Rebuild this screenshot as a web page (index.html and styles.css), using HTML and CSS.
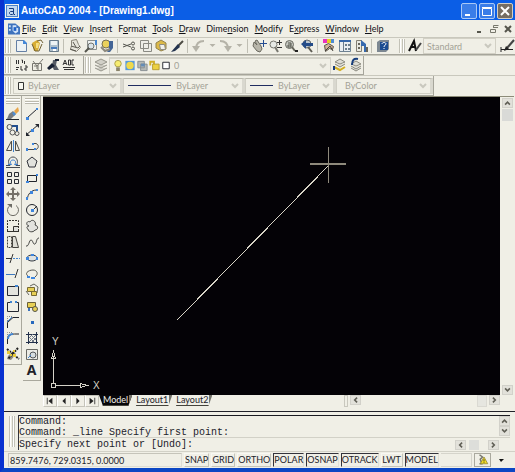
FILE: index.html
```html
<!DOCTYPE html>
<html lang="en">
<head>
<meta charset="utf-8">
<title>AutoCAD 2004 - [Drawing1.dwg]</title>
<link rel="stylesheet" href="styles.css">
</head>
<body>
<div class="window">
  <header class="titlebar">
    <svg class="app-icon" viewBox="0 0 14 14"><path fill="#f4f4ec" d="M0 0h14v14H0z"/><path fill="#4f83c8" d="M1 1h12v12H1z"/><path fill="#c3d9f1" d="M2 2h10v10H2z"/><path fill="none" stroke="#173e80" stroke-width="1" d="M4 4.500h4.500v6M9 7.500H5.500l-1 1v1l1 1h2l1-1M9 10.500h1"/></svg>
    <h1 class="title">AutoCAD 2004 - [Drawing1.dwg]</h1>
    <button class="win-btn" aria-label="Minimize"><svg viewBox="0 0 14 14"><path fill="#fff" d="M3 10h5v2H3z"/></svg></button>
    <button class="win-btn" aria-label="Restore"><svg viewBox="0 0 14 14"><path fill="none" stroke="#fff" d="M2.500 4.500h9v7h-9zM2 3.500h10"/></svg></button>
    <button class="win-btn win-close" aria-label="Close"><svg viewBox="0 0 14 14"><path stroke="#fff" stroke-width="2" d="M3 3l8 8M11 3l-8 8"/></svg></button>
  </header>

  <nav class="menubar">
    <svg class="doc-icon" viewBox="0 0 13 12"><path fill="#3d72bd" d="M0 0h8l5 4v8H0z"/><path fill="#cfe2f8" d="M1 2h2v2H1zM1 6h2v2H1zM5 2h4v3h2v4l-3 2-3-3z"/><path fill="#1e61c8" d="M6 4h3v4H6z"/></svg>
    <button><u>F</u>ile</button><button><u>E</u>dit</button><button><u>V</u>iew</button><button><u>I</u>nsert</button><button>F<u>o</u>rmat</button><button><u>T</u>ools</button><button><u>D</u>raw</button><button>Dime<u>n</u>sion</button><button><u>M</u>odify</button><button>E<u>x</u>press</button><button><u>W</u>indow</button><button><u>H</u>elp</button>
    <span class="mdi">
      <button class="mdi-btn" aria-label="Minimize drawing"><svg viewBox="0 0 10 10"><path fill="#55554c" d="M2 7h4v2H2z"/></svg></button>
      <button class="mdi-btn" aria-label="Restore drawing"><svg viewBox="0 0 10 10"><path fill="none" stroke="#77776c" d="M4.500 4V1.500h5M4 3.500h5M1.500 5.500h5v3h-5z"/></svg></button>
      <button class="mdi-btn" aria-label="Close drawing"><svg viewBox="0 0 10 10"><path stroke="#55554c" stroke-width="2" d="M2 2l6 6M8 2l-6 6"/></svg></button>
    </span>
  </nav>

  <div class="row row-standard">
    <div class="bar bar-main">
      <i class="grip"></i>
      <button class="tool" aria-label="New"><svg viewBox="0 0 16 16"><path fill="#edf2f4" stroke="#6580a5" d="M3.500 2.500h7l3 3v8h-10z"/><path fill="#4387d8" d="M10 2h1l3 3v1h-4z"/></svg></button>
      <button class="tool" aria-label="Open"><svg viewBox="0 0 16 16"><path fill="#d8ad35" d="M3 5l5-3 3 3-2 8H5z"/><path fill="none" stroke="#706135" d="M3 6l3 7h4l3-7M8 3l4-1 2 3"/><path fill="#f5df83" d="M7 5h3l-1 5H7z"/></svg></button>
      <button class="tool" aria-label="Save"><svg viewBox="0 0 16 16"><path fill="#aebfcb" stroke="#667989" d="M4.500 2.500h9v11h-9z"/><path fill="#eef3f4" d="M6 3h6v4H6z"/><path fill="#477bbd" d="M6 9h6v2H6z"/><path fill="#fff" d="M8 11h3v2H8z"/></svg></button>
      <i class="sep"></i>
      <button class="tool" aria-label="Plot"><svg viewBox="0 0 16 16"><path fill="#e5e4db" stroke="#888579" d="M4.500 2.500l5-1 2 5 2 3-4 4-6-2 1-4z"/><path fill="none" stroke="#5c5a52" d="M4 8l7 2 2-2M6 4l3 5M3 11l6 2"/></svg></button>
      <button class="tool" aria-label="Plot preview"><svg viewBox="0 0 16 16"><path fill="#edf0ef" stroke="#8b8f8d" d="M4.500 2.500h9v9h-9z"/><path fill="#4888cf" d="M12 2h2v5h-2z"/><circle cx="8" cy="8" r="3" fill="#dbe4e8" stroke="#6f726d"/><path stroke="#55564e" stroke-width="2" d="M6 10l-4 4"/></svg></button>
      <button class="tool" aria-label="Publish"><svg viewBox="0 0 16 16"><circle cx="7" cy="6" r="4" fill="#ead15b" stroke="#777052"/><path fill="#436596" d="M10 3h4v7l-3 4H8l2-3z"/><path fill="none" stroke="#8c897e" stroke-width="2" d="M2 9l4 4 5-2"/></svg></button>
      <i class="sep"></i>
      <button class="tool" aria-label="Cut"><svg viewBox="0 0 16 16"><path fill="none" stroke="#55564f" stroke-width="1" d="M2 6l8 3M2 9l8-3"/><circle cx="12" cy="5.500" r="1.500" fill="none" stroke="#55564f"/><circle cx="12" cy="10.500" r="1.500" fill="none" stroke="#55564f"/></svg></button>
      <button class="tool" aria-label="Copy"><svg viewBox="0 0 16 16"><path fill="#eeeee8" stroke="#8a8a83" d="M3.500 2.500h8v8h-8zM6.500 5.500h8v8h-8z"/></svg></button>
      <button class="tool" aria-label="Paste"><svg viewBox="0 0 16 16"><path fill="#dcb948" stroke="#93834d" d="M8 2l5 3v6l-5 2-5-3V5z"/><path fill="#f0f0ec" stroke="#8e8c81" d="M6.500 6.500h5l1 5h-5z"/></svg></button>
      <button class="tool" aria-label="Match properties"><svg viewBox="0 0 16 16"><path stroke="#4c4b44" stroke-width="2" d="M14 3L8 9"/><path fill="#24344f" d="M9 6l2 3-5 4-4 1z"/></svg></button>
      <i class="sep"></i>
      <button class="tool" aria-label="Undo"><svg viewBox="0 0 16 16"><path fill="none" stroke="#b5b3a8" stroke-width="2" d="M13 3c-6 0-8 3-8 8"/><path fill="#b5b3a8" d="M1 8h8l-4 6z"/></svg></button>
      <button class="drop" aria-label="Undo list"><svg viewBox="0 0 8 8"><path fill="#b5b3a8" d="M1 2h6L4 5z"/></svg></button>
      <button class="tool" aria-label="Redo"><svg viewBox="0 0 16 16"><path fill="none" stroke="#b5b3a8" stroke-width="2" d="M2 3c6 0 8 3 8 8"/><path fill="#b5b3a8" d="M6 8h8l-4 6z"/></svg></button>
      <button class="drop" aria-label="Redo list"><svg viewBox="0 0 8 8"><path fill="#b5b3a8" d="M1 2h6L4 5z"/></svg></button>
      <i class="sep"></i>
      <button class="tool" aria-label="Pan"><svg viewBox="0 0 16 16"><path fill="#b8b6aa" stroke="#6b6a60" d="M3 4l3 3-2-4 2-1 4 6 1 3-2 3-3-1-4-5z"/><path stroke="#244c91" d="M12.500 2v7M9 5.500h7"/></svg></button>
      <button class="tool" aria-label="Zoom realtime"><svg viewBox="0 0 16 16"><circle cx="6.500" cy="6.500" r="3.500" fill="#e6e9e5" stroke="#77776f"/><path stroke="#77776f" stroke-width="2" d="M8 9l3 5"/><path stroke="#333" d="M12.500 2v5M10 4.500h5M10 9.500h5"/></svg></button>
      <button class="tool" aria-label="Zoom window"><svg viewBox="0 0 16 16"><circle cx="6.500" cy="6.500" r="4" fill="#c6c8c1" stroke="#696a61"/><path fill="none" stroke="#55564d" d="M5 5h3v4H5V7h3"/><path stroke="#66665b" stroke-width="2" d="M9 9l3 4"/><path fill="#222" d="M12 12h3v2h-3z"/></svg></button>
      <button class="tool" aria-label="Zoom previous"><svg viewBox="0 0 16 16"><circle cx="8" cy="6" r="4" fill="#b9c5ce" stroke="#67696a"/><path fill="#244c88" d="M2 6l5-4v3h7v3H7v3z"/><path stroke="#5d5c53" stroke-width="2" d="M9 9l4 5"/></svg></button>
      <i class="sep"></i>
      <button class="tool" aria-label="Properties"><svg viewBox="0 0 16 16"><path fill="#e934be" d="M2 1h4v4H2z"/><path fill="#e8cd21" d="M6 1h4v4H6z"/><path fill="#4c8bd5" d="M10 1h3v4h-3z"/><path fill="#d1b49a" stroke="#57534a" d="M3.500 7.500l4-2 5 3-1 3-3-1-4 3z"/><path stroke="#46433c" fill="none" stroke-width="1" d="M4 13l5-5 3 5"/></svg></button>
      <button class="tool" aria-label="DesignCenter"><svg viewBox="0 0 16 16"><path fill="#e9eef1" stroke="#6f8293" d="M2.500 2.500h11v11h-11z"/><path fill="#3566a9" d="M2 2h12v2H2z"/><path fill="#6b7d8c" d="M6 4h1v9H6zM8 6h2v2H8zM11 6h2v2h-2zM8 10h2v2H8zM11 10h2v2h-2z"/></svg></button>
      <button class="tool" aria-label="Tool palettes"><svg viewBox="0 0 16 16"><path fill="#e9e9e2" stroke="#837f73" d="M3.500 2.500h5v11h-5z"/><path fill="#3669ae" d="M8 2l5 4v8h-2V8H8z"/><path fill="#67645a" d="M5 5h2v2H5zM5 9h2v2H5zM13 9h2v5h-2z"/></svg></button>
      <i class="sep"></i>
      <button class="tool" aria-label="Help"><svg viewBox="0 0 16 16"><path fill="#7c8791" d="M2 4l3-2h9v9l-3 3H2z"/><path fill="#1b4c91" d="M5 4h8v8H5z"/><path fill="none" stroke="#fff" stroke-width="1" d="M7 6c0-2 4-2 4 0 0 1-2 1-2 3M9 10v1"/></svg></button>
    </div>
    <div class="bar bar-styles">
      <i class="grip"></i>
      <button class="tool" aria-label="Text style"><svg viewBox="0 0 16 16"><path fill="none" stroke="#111" stroke-width="2" d="M2 13L7 3l2 10M4 9h5"/><path stroke="#444" stroke-width="2" d="M14 5l-5 7"/></svg></button>
      <select class="combo" aria-label="Text style name" disabled><option>Standard</option></select>
      <button class="tool tool-end" aria-label="Dimension style"><svg viewBox="0 0 16 16"><path stroke="#222" d="M2 9v5M2 11.500h12"/><path stroke="#444" stroke-width="2" d="M15 2l-7 8"/><path fill="#222" d="M7 8l3 3-5 2z"/></svg></button>
    </div>
  </div>

  <div class="row row-layers">
    <div class="bar bar-text">
      <i class="grip"></i>
      <button class="tool" aria-label="Arc text"><svg viewBox="0 0 16 16"><path fill="none" stroke="#333" stroke-width="1" d="M3.500 3v4M5.500 3v4M8.500 3h1v3M11.500 4v3M3 10.500h3M3 12.500h2M8 9v4h2M12 9h2v2h-2v2h2"/></svg></button>
      <button class="tool" aria-label="Edit block"><svg viewBox="0 0 16 16"><path fill="none" stroke="#77766f" d="M3.500 6.500h9v7h-9zM4 4l4 5 6-7M5 9h3v3M9 8v5"/></svg></button>
      <button class="tool" aria-label="Find text"><svg viewBox="0 0 16 16"><path fill="#555b64" d="M8 3h4l-1 5 3 5H9L7 9z"/><path fill="#172033" d="M2 11l5-5 3 3-6 4zM10 2h4v2h-4z"/></svg></button>
      <button class="tool" aria-label="Spelling"><svg viewBox="0 0 16 16"><path fill="none" stroke="#333" d="M2 8l2-5 2 5M3 6.500h2M7.500 3v5h2V3zM13 3h-2v5h2M2 10.500h12M3 12.500h10"/></svg></button>
    </div>
    <div class="bar bar-layer">
      <i class="grip"></i>
      <button class="tool" aria-label="Layer manager"><svg viewBox="0 0 16 16"><path fill="#d1d0c8" stroke="#96958b" d="M8 2l6 3-6 3-6-3zM2 8l6 3 6-3M2 11l6 3 6-3"/></svg></button>
      <div class="layer-box">
        <svg class="state" viewBox="0 0 12 14"><circle cx="6" cy="5" r="3.500" fill="#f7ed70" stroke="#a99d48"/><path fill="#8b846a" d="M4 9h4v4H4z"/></svg>
        <svg class="state" viewBox="0 0 12 14"><path fill="#589bdb" d="M1 2h10v10H1z"/><circle cx="6" cy="7" r="4" fill="#efd94b"/></svg>
        <svg class="state" viewBox="0 0 12 14"><path fill="#b6b9b6" stroke="#858d91" d="M1.500 2.500h7v7h-7zM4.500 5.500h7v7h-7z"/><path fill="#638cb7" d="M5 5h4v3H5z"/></svg>
        <svg class="state" viewBox="0 0 12 14"><path fill="none" stroke="#cfae28" stroke-width="2" d="M2 7V3h4v4"/><path fill="#ecd141" stroke="#b59b2f" d="M4.500 5.500h7v6h-7z"/></svg>
        <svg class="state swatch" viewBox="0 0 12 14"><path fill="#fff" stroke="#22232c" stroke-width="1" d="M2.500 3.500h7v7h-7z"/></svg>
        <select class="layer-select" aria-label="Layer" disabled><option>0</option></select>
      </div>
      <button class="tool" aria-label="Make object layer current"><svg viewBox="0 0 16 16"><path fill="#deddd5" stroke="#8b8a80" d="M9 2l5 3-5 2-5-2zM4 7l5 3 5-3"/><path fill="none" stroke="#d2af24" stroke-width="2" d="M3 10l6 3 5-3"/><path fill="#183c7b" d="M2 9h2v4H2z"/></svg></button>
      <button class="tool" aria-label="Layer previous"><svg viewBox="0 0 16 16"><path fill="#deddd5" stroke="#8b8a80" d="M9 4l5 3-5 2-5-2zM4 9l5 3 5-3M4 11l5 3 5-3"/><path fill="none" stroke="#173d7c" stroke-width="2" d="M11 2C7 1 5 3 5 8"/></svg></button>
    </div>
  </div>

  <div class="row row-props">
    <div class="bar bar-props">
      <i class="grip"></i>
      <div class="prop prop-color"><svg class="chip" viewBox="0 0 10 10"><path fill="#f7f7f0" stroke="#333" d="M2.500 1.500h5v7h-5z"/></svg><select aria-label="Color" disabled><option>ByLayer</option></select></div>
      <div class="prop prop-line"><i class="stroke"></i><select aria-label="Linetype" disabled><option>ByLayer</option></select></div>
      <div class="prop prop-weight"><i class="stroke stroke-short"></i><select aria-label="Lineweight" disabled><option>ByLayer</option></select></div>
      <div class="prop prop-plot"><select aria-label="Plot style" disabled><option>ByColor</option></select></div>
    </div>
  </div>

  <main class="workspace">
    <div class="palette palette-modify">
      <i class="grip-h"></i>
      <button class="side" aria-label="Erase"><svg viewBox="0 0 16 16"><path stroke="#22262e" d="M1 13.500h13"/><path fill="#777b7f" d="M4 8l4-3 3 3-5 5H2z"/><path fill="#e7a64b" d="M9 5l4-4 1 4-3 3z"/><path fill="#4e8dd3" d="M7 7l2-1 2 2-2 2z"/></svg></button>
      <button class="side" aria-label="Copy object"><svg viewBox="0 0 16 16"><circle cx="4.500" cy="5" r="2.500" fill="none" stroke="#555"/><circle cx="7.500" cy="10.500" r="2.500" fill="none" stroke="#555"/><circle cx="12" cy="11.500" r="2" fill="none" stroke="#555"/><path fill="none" stroke="#234f8d" stroke-width="2" d="M7 4h5v5"/></svg></button>
      <button class="side" aria-label="Mirror"><svg viewBox="0 0 16 16"><path fill="none" stroke="#4e4d48" d="M6.500 3v9.500h-5zM10.500 3v9.500h4z"/><path stroke="#4284cf" d="M8.500 2v12"/></svg></button>
      <button class="side" aria-label="Offset"><svg viewBox="0 0 16 16"><path fill="none" stroke="#454b53" d="M1 13.500h14M1 11.500h4C2 8 4 3 8 3s6 5 3 8.500h4"/><path fill="none" stroke="#3d7fcd" d="M3 10.500h3.500c-2-2-1-4.500 1.500-4.500s3.500 2.500 1.500 4.500H13"/></svg></button>
      <button class="side" aria-label="Array"><svg viewBox="0 0 16 16"><path fill="none" stroke="#292d33" stroke-width="1" d="M2.500 2.500h4v4h-4zM9.500 2.500h4v4h-4zM2.500 9.500h4v4h-4zM9.500 9.500h4v4h-4z"/></svg></button>
      <button class="side" aria-label="Move"><svg viewBox="0 0 16 16"><path fill="#757168" d="M8 1l3 3H9v3h3V5l3 3-3 3V9H9v3h2l-3 3-3-3h2V9H4v2L1 8l3-3v2h3V4H5z"/></svg></button>
      <button class="side" aria-label="Rotate"><svg viewBox="0 0 16 16"><path fill="none" stroke="#6d6c65" stroke-width="1" d="M5 3.500a5.500 5.500 0 1 0 6 0"/><path fill="#6d6c65" d="M2 2h5v4z"/></svg></button>
      <button class="side" aria-label="Scale"><svg viewBox="0 0 16 16"><path fill="none" stroke="#34332f" stroke-dasharray="2 1" d="M2.500 13V2.500h11V13"/><path fill="none" stroke="#34332f" d="M2 13.500h12M8.500 13V8.500h5"/><path fill="#dedfdb" d="M9 9h4v4H9z"/></svg></button>
      <button class="side" aria-label="Stretch"><svg viewBox="0 0 16 16"><path fill="#ddddd5" stroke="#44433e" d="M7.500 2.500h3l3 11h-6z"/><path fill="none" stroke="#44433e" stroke-dasharray="2 1" d="M2.500 13.500V2.500h4v11z"/></svg></button>
      <button class="side" aria-label="Trim"><svg viewBox="0 0 16 16"><path stroke="#333" d="M1 8.500h5M8 4l-3 9"/><path stroke="#4284cf" stroke-dasharray="2 1" d="M8 8.500h7"/></svg></button>
      <button class="side" aria-label="Extend"><svg viewBox="0 0 16 16"><path stroke="#3e79be" stroke-width="1" d="M1 8.500h9"/><path stroke="#333" d="M13 3l-3 9"/></svg></button>
      <button class="side" aria-label="Break at point"><svg viewBox="0 0 16 16"><path fill="#e4e4de" stroke="#252831" d="M2.500 4.500h11v9h-11z"/><path fill="#4284cf" d="M10 3h3v2h-3z"/></svg></button>
      <button class="side" aria-label="Break"><svg viewBox="0 0 16 16"><path fill="none" stroke="#252831" d="M5 4.500H2.500v9h11v-9H11"/><path fill="#4284cf" d="M5 3h2v2H5zM10 3h2v2h-2z"/></svg></button>
      <button class="side" aria-label="Chamfer"><svg viewBox="0 0 16 16"><path fill="none" stroke="#22252c" d="M2.500 14V8.500L8 3.500h6"/><path stroke="#4284cf" d="M2 8l5-5"/><path fill="none" stroke="#888" stroke-dasharray="1 1" d="M2.500 7V2.500H7"/></svg></button>
      <button class="side" aria-label="Fillet"><svg viewBox="0 0 16 16"><path fill="none" stroke="#22252c" d="M2.500 14v-4c0-4 3-6 7-6H14"/><path fill="none" stroke="#4284cf" stroke-width="2" d="M3 9c0-3 2-5 5-5"/><path fill="none" stroke="#888" stroke-dasharray="1 1" d="M2.500 7V2.500H7"/></svg></button>
      <button class="side" aria-label="Explode"><svg viewBox="0 0 16 16"><path fill="#8d8a7c" d="M3 10l5-5 3 3-5 6-4-1z"/><path stroke="#222" stroke-width="2" stroke-dasharray="2 1" d="M2 3l12 10M13 2L3 13"/><path fill="#e7ca3a" d="M2 5h3v3H2zM8 8h3v3H8zM5 8h2v2H5zM8 4h2v2H8z"/></svg></button>
    </div>
    <div class="palette palette-draw">
      <i class="grip-h"></i>
      <button class="side" aria-label="Line"><svg viewBox="0 0 16 16"><path stroke="#22262e" d="M3 12L13 3"/><path fill="#3d85dd" d="M2 11h3v3H2zM12 2h2v2h-2z"/></svg></button>
      <button class="side" aria-label="Construction line"><svg viewBox="0 0 16 16"><path stroke="#22262e" stroke-width="1" d="M2 13L14 3"/><path fill="#22262e" d="M2 10v4h4zM11 2h4v4z"/><path fill="#3d85dd" d="M7 7h3v3H7z"/></svg></button>
      <button class="side" aria-label="Polyline"><svg viewBox="0 0 16 16"><path fill="none" stroke="#494947" stroke-width="1" d="M2 11.500h10c3-1 3-5 0-6H9"/><path fill="#3d85dd" d="M2 10h2v3H2zM10 10h2v2h-2zM8 5h2v2H8z"/></svg></button>
      <button class="side" aria-label="Polygon"><svg viewBox="0 0 16 16"><path fill="#e1e2dd" stroke="#30333a" d="M8 3l5 4-2 6H5L3 7z"/></svg></button>
      <button class="side" aria-label="Rectangle"><svg viewBox="0 0 16 16"><path fill="none" stroke="#22262e" d="M3.500 5.500h9v6h-9z"/><path fill="#3d85dd" d="M12 4h2v2h-2zM2 11h3v2H2z"/></svg></button>
      <button class="side" aria-label="Arc"><svg viewBox="0 0 16 16"><path fill="none" stroke="#33363b" d="M3.500 13c0-5 4-9 9-9"/><path fill="#3d85dd" d="M2 11h2v3H2zM6 5h3v3H6zM12 3h2v2h-2z"/></svg></button>
      <button class="side" aria-label="Circle"><svg viewBox="0 0 16 16"><circle cx="8" cy="8" r="5.500" fill="none" stroke="#22262e"/><path stroke="#22262e" d="M9 8l4-4"/><path fill="#3d85dd" d="M7 7h3v3H7z"/></svg></button>
      <button class="side" aria-label="Revision cloud"><svg viewBox="0 0 16 16"><path fill="#e3e3de" stroke="#464744" d="M5 8C1 7 3 2 6 4c2-4 7 0 5 3 4 1 3 5 0 5-2 3-7 2-7-1-2-1-1-3 1-3z"/></svg></button>
      <button class="side" aria-label="Spline"><svg viewBox="0 0 16 16"><path fill="none" stroke="#3c3d3b" d="M2 12c3 1 3-6 5-6s2 5 4 4 1-6 4-6"/></svg></button>
      <button class="side" aria-label="Ellipse"><svg viewBox="0 0 16 16"><ellipse cx="8" cy="8" rx="5" ry="3" fill="#dfe2e1" stroke="#353a42"/><path fill="#3d85dd" d="M2 7h3v3H2zM7 4h3v2H7zM12 7h2v3h-2z"/></svg></button>
      <button class="side" aria-label="Ellipse arc"><svg viewBox="0 0 16 16"><path fill="none" stroke="#555650" stroke-width="1" d="M4 10C0 7 5 4 9 4s6 4 2 7"/><path fill="#3d85dd" d="M3 10h3v2H3zM7 11h4v2H7z"/></svg></button>
      <button class="side" aria-label="Insert block"><svg viewBox="0 0 16 16"><path fill="none" stroke="#65665e" d="M6 4l4-2 4 3-1 6M2 9l3 4"/><path fill="#e7d055" stroke="#776a32" d="M3.500 5.500h7v4h-7zM7.500 9.500h5v4h-5z"/></svg></button>
      <button class="side" aria-label="Make block"><svg viewBox="0 0 16 16"><path fill="#e7d055" stroke="#6a6039" d="M3.500 4.500h8v5h-8z"/><circle cx="11" cy="11" r="2.500" fill="#e7d055" stroke="#55564a"/><path fill="#3d73bb" d="M4 10h2v3H4z"/></svg></button>
      <button class="side" aria-label="Point"><svg viewBox="0 0 16 16"><path fill="#2769bd" d="M7 7h3v3H7z"/></svg></button>
      <button class="side" aria-label="Hatch"><svg viewBox="0 0 16 16"><path fill="none" stroke="#23314b" d="M2 4.500h12M2 12.500h12M4.500 2v12M12.500 2v12"/><path stroke="#6f7887" d="M5 8l4-4M5 12l7-7M8 12l4-4M7 5l5 5M5 7l5 5"/></svg></button>
      <button class="side" aria-label="Region"><svg viewBox="0 0 16 16"><path fill="#ecece6" stroke="#696a64" d="M2.500 3.500h11v10h-11z"/><circle cx="9" cy="9" r="3" fill="#d6dddf" stroke="#55585a"/><path stroke="#4284cf" d="M4 12l3-3"/></svg></button>
      <button class="side side-text" aria-label="Multiline text">A</button>
    </div>

    <section class="drawing">
      <svg class="canvas" viewBox="0 0 456 297" preserveAspectRatio="xMinYMax meet" shape-rendering="crispEdges" role="img" aria-label="Model space">
        <path class="entity" d="M134 222L284 69"/>
        <path class="cross" stroke-width="2" d="M266 67h36"/>
        <path class="cross" d="M284.500 50v35"/>
        <g class="ucs"><path d="M8.500 285.500h4v4h-4zM10.500 285v-27M13 287.500h24M8.500 260.500l2-7 2 7zM37 285.500l7 2-7 2z"/></g>
        <text class="ucs-label" x="9" y="247">Y</text>
        <text class="ucs-label" x="50" y="291">X</text>
      </svg>
      <div class="vscroll">
        <button class="sb" aria-label="Scroll up"><svg viewBox="0 0 10 10"><path d="M2 7l3-3 3 3"/></svg></button>
        <span class="thumb-v"></span>
        <button class="sb sb-last" aria-label="Scroll down"><svg viewBox="0 0 10 10"><path d="M2 3l3 3 3-3"/></svg></button>
      </div>
      <div class="tabs">
        <button class="nav" aria-label="First tab"><svg viewBox="0 0 10 10"><path d="M1 1h1v8H1zM8 1v8L3 5z"/></svg></button>
        <button class="nav" aria-label="Previous tab"><svg viewBox="0 0 10 10"><path d="M7 1v8L3 5z"/></svg></button>
        <button class="nav" aria-label="Next tab"><svg viewBox="0 0 10 10"><path d="M3 1v8l4-4z"/></svg></button>
        <button class="nav" aria-label="Last tab"><svg viewBox="0 0 10 10"><path d="M2 1v8l5-4zM8 1h1v8H8z"/></svg></button>
        <button class="tab tab-on">Model</button><button class="tab">Layout1</button><button class="tab">Layout2</button>
        <div class="hscroll">
          <span class="split"></span>
          <button class="sb" aria-label="Scroll left"><svg viewBox="0 0 10 10"><path d="M7 2L4 5l3 3"/></svg></button>
          <span class="thumb-h"></span>
          <button class="sb" aria-label="Scroll right"><svg viewBox="0 0 10 10"><path d="M3 2l3 3-3 3"/></svg></button>
        </div>
      </div>
    </section>
  </main>

  <section class="command">
    <i class="grip grip-tall"></i>
    <div class="console">
      <div class="history">
        <div class="lines"><p>Command:</p><p>Command: _line Specify first point:</p></div>
        <div class="hist-scroll">
          <button class="sb" aria-label="Scroll history up"><svg viewBox="0 0 10 10"><path d="M2 7l3-3 3 3"/></svg></button>
          <button class="sb" aria-label="Scroll history down"><svg viewBox="0 0 10 10"><path d="M2 3l3 3 3-3"/></svg></button>
        </div>
      </div>
      <div class="prompt">
        <label for="cmd">Specify next point or [Undo]:</label>
        <input id="cmd" type="text">
        <button class="sb" aria-label="Scroll prompt left"><svg viewBox="0 0 10 10"><path d="M7 2L4 5l3 3"/></svg></button>
        <span class="thumb-p"></span>
        <button class="sb" aria-label="Scroll prompt right"><svg viewBox="0 0 10 10"><path d="M3 2l3 3-3 3"/></svg></button>
      </div>
    </div>
  </section>

  <footer class="status">
    <output class="coords">859.7476, 729.0315, 0.0000</output>
    <button class="mode">SNAP</button><button class="mode">GRID</button><button class="mode mode-wide">ORTHO</button><button class="mode mode-wide on">POLAR</button><button class="mode mode-wide on">OSNAP</button><button class="mode mode-wider on">OTRACK</button><button class="mode mode-narrow">LWT</button><button class="mode mode-wide on">MODEL</button>
    <span class="filler"></span>
    <button class="tray" aria-label="Communication center"><svg viewBox="0 0 16 16"><path fill="none" stroke="#77766b" stroke-width="2" d="M4 1l4 3-3 3 2 6H4"/><path fill="#f2dc23" stroke="#8e8230" d="M10 4l5 9H5z"/><path stroke="#222" stroke-width="1" d="M10 7v3M10 11v1"/></svg></button>
    <button class="tray-menu" aria-label="Tray settings"><svg viewBox="0 0 8 8"><path fill="#111" d="M1 3h5L3 6z"/></svg></button>
  </footer>
</div>
</body>
</html>
```
FILE: styles.css
```css
* { box-sizing: border-box; }

body {
  margin: 0;
  background: #f0efe6;
  color: #22222a;
  font-family: Lato, "Liberation Sans", sans-serif;
  font-size: 9px;
}

button, select, input { margin: 0; padding: 0; border: 0; background: none; color: inherit; font: inherit; }
button svg { display: block; width: 100%; height: 100%; }
p { margin: 0; }
i { flex: none; }

.window {
  display: flex;
  flex-direction: column;
  min-height: 100vh;
  border-left: 4px solid #0831d0;
  border-bottom: 4px solid #0b46c4;
  background: #f0efe6;
}

/* Title and menu */
.titlebar { display: flex; align-items: center; gap: 2px; height: 20px; padding: 2px 2px 0 1px; background: #0b5ee6; }
.app-icon { width: 14px; height: 14px; flex: none; }
.title { flex: 1; margin: 0; color: #fff; font: bold 10px/16px "Liberation Sans", sans-serif; white-space: nowrap; }
.win-btn { width: 16px; height: 16px; border: 1px solid #a9c8f6; border-radius: 2px; background: #3a7de8; }
.win-close { background: #756d63; border-color: #d3cec4; }

.menubar { display: flex; align-items: center; height: 17px; padding-left: 4px; gap: 6px; color: #111116; white-space: nowrap; }
.doc-icon { width: 12px; height: 12px; flex: none; margin-right: -4px; }
.mdi { display: flex; gap: 4px; margin-left: auto; padding-right: 2px; }
.mdi-btn { width: 10px; height: 10px; }

/* Toolbars */
.row { display: flex; border-top: 1px solid #c9c8bd; }
.row-standard { height: 18px; }
.row-layers { height: 20px; }
.row-props { height: 21px; }
.bar { display: flex; align-items: center; flex: none; border-right: 1px solid #a6a59b; border-bottom: 1px solid #a6a59b; }
.row-standard .bar { border-right: 0; }
.grip { align-self: stretch; width: 6px; margin: 1px 2px 1px 1px; border: solid #c3c2b7; border-width: 0 1px; background: linear-gradient(90deg, #fff 1px, transparent 1px 2px, #c3c2b7 2px 3px, #fff 3px); }
.sep { width: 1px; height: 14px; margin: 0 3px 0 2px; background: #c0bfb4; }
.tool { flex: none; width: 16px; height: 16px; }
.drop { flex: none; width: 11px; height: 8px; }
.bar-main { flex: 0 0 394px; }
.bar-styles { flex: 1 0 0; min-width: 0; overflow: hidden; }
.bar-text { width: 80px; }
.bar-layer { width: 280px; }

select { appearance: none; opacity: 1; color: #a3a296; }
.combo, .layer-select, .prop select {
  background: url("data:image/svg+xml,%3Csvg xmlns='http://www.w3.org/2000/svg' viewBox='0 0 8 8'%3E%3Cpath d='M1 2l3 3 3-3' fill='none' stroke='%23c9c8be' stroke-width='2'/%3E%3C/svg%3E") no-repeat right 3px center / 8px 8px;
}
.combo { flex: 1; height: 16px; padding-left: 3px; border: 1px solid #d2d0c5; }
.tool-end { margin-left: 3px; }

.layer-box { display: flex; align-items: center; flex: 1; height: 17px; padding-left: 2px; border: 1px solid #d2d1c8; border-top: 2px solid #d5d4ca; }
.state { width: 12px; height: 13px; flex: none; }
.swatch { margin-right: 2px; }
.layer-select { flex: 1; align-self: stretch; }

.bar-props { width: 430px; }
.prop { display: flex; align-items: center; height: 16px; border: 1px solid #d0cfc5; border-top-color: #b9b8ad; border-right: 3px solid #d9d8cf; }
.prop select { flex: 1; min-width: 0; align-self: stretch; }
.prop-color { flex: 113; padding-left: 2px; }
.prop-line { flex: 123; padding-left: 4px; }
.prop-weight { flex: 90; padding-left: 4px; }
.prop-plot { flex: 92; padding-left: 8px; }
.chip { width: 10px; height: 10px; margin-right: 2px; }
.stroke { width: 43px; height: 1px; margin-right: 5px; background: #202d60; }
.stroke-short { width: 23px; }

/* Workspace */
.workspace { display: flex; flex: 1; padding-right: 1px; }
.palette { display: flex; flex-direction: column; align-items: center; align-self: flex-start; flex: none; width: 18px; padding: 2px 0; border: 1px solid #a9a89d; border-width: 0 1px 1px 0; }
.palette-draw { margin: 0 2px 0 1px; }
.grip-h { width: 14px; height: 6px; margin-bottom: 2px; border: solid #bbb9ad; border-width: 1px 0; background: linear-gradient(#fff 1px, transparent 1px 2px, #bbb9ad 2px 3px, #fff 3px); }
.side { width: 16px; height: 16px; flex: none; }
.side-text { font: bold 14px/16px "Open Sans", sans-serif; text-align: center; }

.drawing { display: grid; flex: 1; grid-template: minmax(0, 1fr) 12px / minmax(0, 1fr) 14px; margin-bottom: 4px; border-top: 1px solid #8c8b78; }
.canvas { width: 100%; height: 100%; background: #040206; }
.entity { stroke: #d8d4c6; }
.cross { stroke: #8f8a7c; }
.ucs { fill: none; stroke: #d5d2c8; }
.ucs-label { fill: #d5d2c8; font: 10px "Liberation Sans", sans-serif; }

.vscroll { display: flex; flex-direction: column; align-items: center; gap: 1px; padding-top: 1px; }
.sb { flex: none; width: 11px; height: 10px; border: 1px solid #d2d1ca; background: #e2e1da; }
.sb path { fill: none; stroke: #605f56; stroke-width: 2; }
.sb-last { margin-top: auto; }
.thumb-v { width: 11px; height: 12px; background: #d9dad7; }

.tabs { display: flex; grid-column: 1 / 2; min-width: 0; }
.nav { flex: none; width: 14px; height: 12px; padding: 1px; border: 1px solid #c5c4ba; border-left-color: #fff; }
.nav path { fill: #222; }
.tab { flex: none; height: 11px; padding: 0 4px; background: #f0efe6; border-bottom: 1px solid #44433c; clip-path: polygon(0 0, 100% 0, calc(100% - 4px) 100%, 4px 100%); box-shadow: inset -3px 0 #77766d; line-height: 10px; }
.tab-on { background: #08070a; color: #f0efe6; }
.hscroll { display: flex; flex: 0 1 156px; margin-left: auto; gap: 2px; }
.split { width: 4px; border: 1px solid #c9c8be; }
.thumb-h { width: 10px; margin-left: auto; border: 1px solid #dad9d2; background: #e6e6e0; }

/* Command window */
.command { display: flex; height: 40px; padding: 3px 5px 1px 4px; border-top: 1px solid #22222a; }
.grip-tall { margin: 1px 3px 3px 1px; }
.console { flex: 1; min-width: 0; border-left: 1px solid #33333b; font: 10px/11px "Liberation Mono", monospace; }
.history { display: flex; justify-content: space-between; height: 23px; border-top: 1px solid #1a1a20; border-bottom: 1px solid #d2d1c7; white-space: pre; overflow: hidden; }
.hist-scroll { display: flex; flex-direction: column; }
.prompt { display: flex; align-items: center; gap: 3px; height: 13px; padding-right: 11px; }
.prompt input { flex: 1; min-width: 0; outline: 0; }
.thumb-p { width: 10px; height: 10px; margin-right: 6px; background: #dddeda; }

/* Status bar */
.status { display: flex; align-items: stretch; gap: 2px; height: 17px; padding: 1px 4px; border-top: 1px solid #d2d1c7; white-space: nowrap; }
.coords { flex: 0 0 174px; padding-left: 1px; border: 1px solid #c5c4ba; border-color: #c5c4ba #dddcd4 #dddcd4 #c5c4ba; line-height: 13px; }
.mode { flex: 0 0 24px; border: 1px solid #c5c4ba; border-top-color: #f8f8f2; border-left-color: #f8f8f2; line-height: 12px; }
.mode-narrow { flex-basis: 22px; }
.mode-wide { flex-basis: 31px; }
.mode-wider { flex-basis: 36px; }
.on { border-color: #33333b #e0dfd6 #e0dfd6 #33333b; }
.filler { flex: 1; border: 1px solid #d5d4cb; border-left: 0; }
.tray { width: 17px; border: 1px solid #aaa99e; }
.tray-menu { width: 18px; padding: 3px 5px; }
```
